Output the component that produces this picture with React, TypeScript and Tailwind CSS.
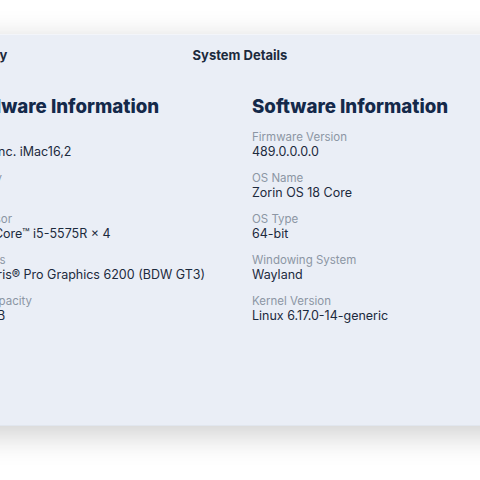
import React from 'react';

type Item = { label: string; value: string };

const hardware: Item[] = [
  { label: 'Model', value: 'Apple Inc. iMac16,2' },
  { label: 'Memory', value: '8 GiB' },
  { label: 'Processor', value: 'Intel® Core™ i5-5575R × 4' },
  { label: 'Graphics', value: 'Intel® Iris® Pro Graphics 6200 (BDW GT3)' },
  { label: 'Disk Capacity', value: '64.4 GB' },
];

const software: Item[] = [
  { label: 'Firmware Version', value: '489.0.0.0.0' },
  { label: 'OS Name', value: 'Zorin OS 18 Core' },
  { label: 'OS Type', value: '64-bit' },
  { label: 'Windowing System', value: 'Wayland' },
  { label: 'Kernel Version', value: 'Linux 6.17.0-14-generic' },
];

const Section: React.FC<{ title: string; items: Item[] }> = ({ title, items }) => (
  <div className="flex flex-col">
    <h2 className="text-[18.7px] leading-[24px] font-extrabold text-[#14294a] whitespace-nowrap">{title}</h2>
    <div className="flex flex-col gap-[11px] mt-[11px]">
      {items.map((it) => (
        <div key={it.label} className="flex flex-col whitespace-nowrap">
          <span className="text-[11.5px] leading-[14px] text-[#8c96a4]">{it.label}</span>
          <span className="text-[12.5px] leading-[16px] text-[#1c2a3d]">{it.value}</span>
        </div>
      ))}
    </div>
  </div>
);

export default function App() {
  return (
    <div
      className="w-[480px] h-[480px] overflow-hidden bg-white pt-[34px]"
      style={{ fontFamily: 'Inter, "Noto Sans", sans-serif' }}
    >
      <div className="w-[620px] h-[392px] ml-[-70px] bg-[#eaeef6] border-t border-[#f3f5fa] border-b border-b-[#e1e6ee] shadow-[0_8px_30px_rgba(0,0,0,0.2)]">
        <div className="relative h-[42px] flex items-center justify-center">
          <span className="absolute left-[16px] text-[13px] font-bold text-[#1c2a3d]">Summary</span>
          <span className="text-[13px] font-bold text-[#1c2a3d]">System Details</span>
        </div>
        <div className="grid grid-cols-[295px_1fr] px-[27px] pt-[18px]">
          <Section title="Hardware Information" items={hardware} />
          <Section title="Software Information" items={software} />
        </div>
      </div>
    </div>
  );
}
